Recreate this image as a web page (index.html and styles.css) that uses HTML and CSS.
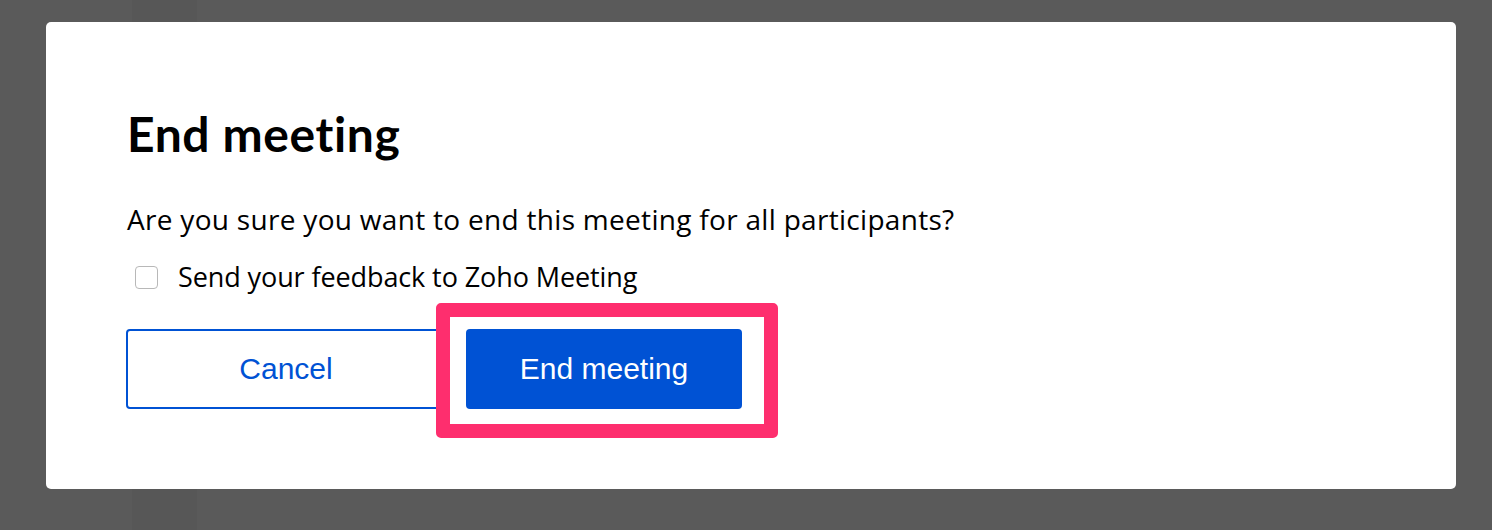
FILE: index.html
```html
<!DOCTYPE html>
<html lang="en">
<head>
<meta charset="utf-8">
<title>End meeting</title>
<link rel="stylesheet" href="styles.css">
</head>
<body>
<div class="backdrop">
  <div class="strip"></div>
  <div class="modal">
    <h1 class="title">End meeting</h1>
    <p class="message">Are you sure you want to end this meeting for all participants?</p>
    <label class="feedback">
      <span class="checkbox"></span>
      <span class="feedback-text">Send your feedback to Zoho Meeting</span>
    </label>
    <div class="actions">
      <button class="btn btn-outline">Cancel</button>
      <div class="highlight-wrap">
        <button class="btn btn-primary">End meeting</button>
        <span class="highlight"></span>
      </div>
    </div>
  </div>
</div>
</body>
</html>
```
FILE: styles.css
```css
html, body {
  margin: 0;
  padding: 0;
  background: #5a5a5a;
}
.backdrop {
  position: relative;
  width: 1492px;
  height: 530px;
  padding: 22px 0 0 46px;
  box-sizing: border-box;
}
.strip {
  position: absolute;
  left: 132px;
  top: 0;
  width: 65px;
  height: 530px;
  background: #575757;
}
.modal {
  position: relative;
  width: 1410px;
  height: 467px;
  background: #ffffff;
  border-radius: 5px;
  box-sizing: border-box;
  padding: 84px 0 0 81px;
  font-family: "Open Sans", "Noto Sans", sans-serif;
  color: #000;
}
.title {
  margin: 0;
  font-family: Lato, "Open Sans", sans-serif;
  font-size: 48px;
  font-weight: 700;
  line-height: 56px;
  letter-spacing: 0.6px;
  font-variant-ligatures: none;
}
.message {
  margin: 39px 0 0;
  font-size: 28px;
  line-height: 36px;
  letter-spacing: 0.3px;
}
.feedback {
  display: flex;
  align-items: center;
  gap: 20px;
  margin-top: 22px;
  padding-left: 8px;
}
.checkbox {
  width: 21px;
  height: 21px;
  border: 1px solid #b8b8b8;
  border-radius: 4px;
  background: #fff;
}
.feedback-text {
  font-size: 27px;
  line-height: 36px;
  letter-spacing: -0.1px;
}
.actions {
  display: flex;
  gap: 20px;
  margin-top: 34px;
  margin-left: -1px;
}
.btn {
  height: 80px;
  border-radius: 4px;
  font-family: "Liberation Sans", Arial, sans-serif;
  font-size: 30px;
  padding: 0;
  cursor: pointer;
}
.btn-outline {
  width: 320px;
  background: #fff;
  border: 2px solid #0052d4;
  color: #0052d4;
}
.highlight-wrap {
  position: relative;
}
.btn-primary {
  width: 276px;
  background: #0052d4;
  border: none;
  color: #fff;
}
.highlight {
  position: absolute;
  left: -30px;
  top: -26px;
  width: 342px;
  height: 135px;
  box-sizing: border-box;
  border: 14px solid #fe2e6e;
  border-radius: 5px;
}
```
